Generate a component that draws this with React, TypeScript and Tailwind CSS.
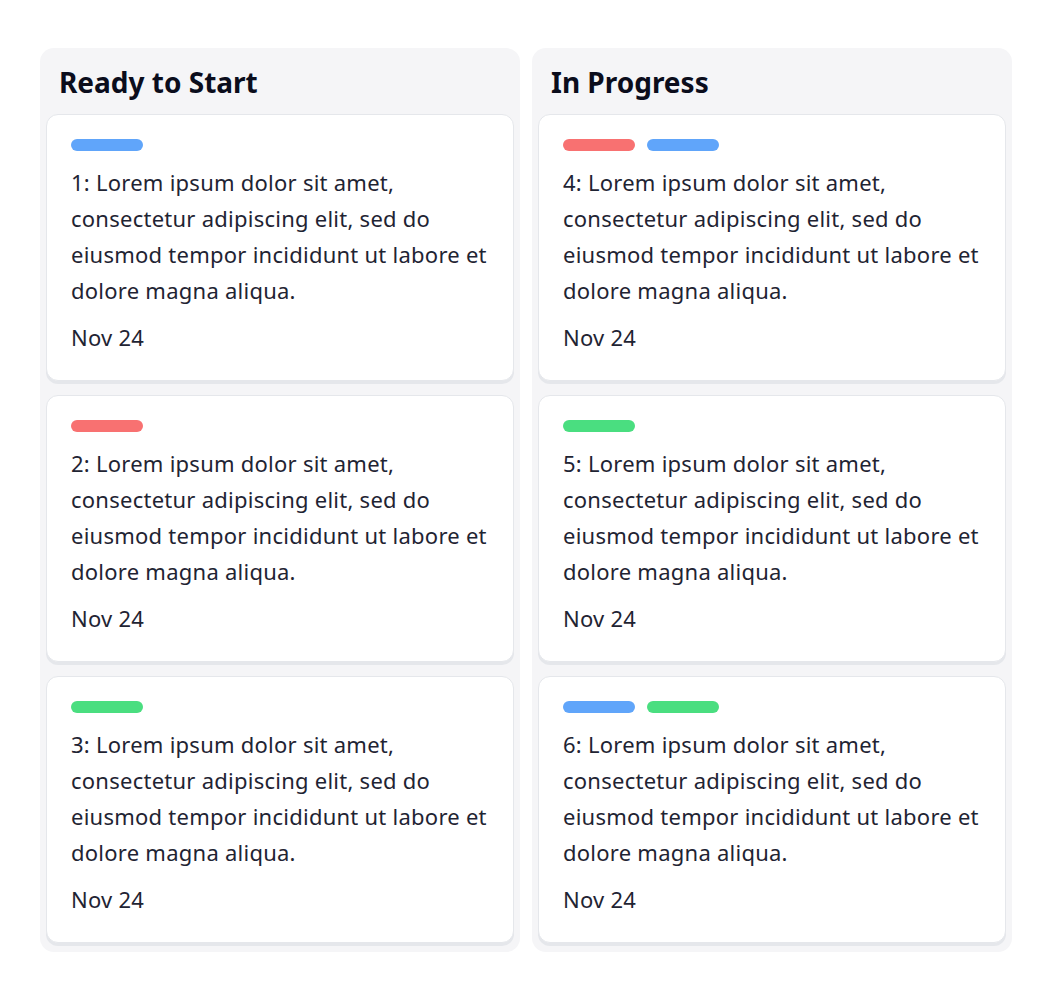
import React from "react";

const BLUE = "bg-[#60a5fa]";
const RED = "bg-[#f87171]";
const GREEN = "bg-[#4ade80]";

type Card = { id: number; tags: string[] };

const columns: { title: string; cards: Card[] }[] = [
  {
    title: "Ready to Start",
    cards: [
      { id: 1, tags: [BLUE] },
      { id: 2, tags: [RED] },
      { id: 3, tags: [GREEN] },
    ],
  },
  {
    title: "In Progress",
    cards: [
      { id: 4, tags: [RED, BLUE] },
      { id: 5, tags: [GREEN] },
      { id: 6, tags: [BLUE, GREEN] },
    ],
  },
];

function TaskCard({ card }: { card: Card }) {
  return (
    <div className="bg-white border border-[#e5e7eb] rounded-[12px] shadow-[0_3px_0_#e5e7eb] px-6 pt-6 pb-[25px]">
      <div className="flex gap-3 mb-[13px]">
        {card.tags.map((t, i) => (
          <span key={i} className={`block w-[72px] h-[12px] rounded-full ${t}`} />
        ))}
      </div>
      <p className="text-[22px] leading-[36px] tracking-[0.25px] text-[#1f2433] whitespace-nowrap">
        <span className="block">{card.id}: Lorem ipsum dolor sit amet,</span>
        <span className="block">consectetur adipiscing elit, sed do</span>
        <span className="block">eiusmod tempor incididunt ut labore et</span>
        <span className="block">dolore magna aliqua.</span>
      </p>
      <div className="mt-[11px] text-[22px] leading-[36px] tracking-[0.25px] text-[#1f2433]">Nov 24</div>
    </div>
  );
}

export default function App() {
  return (
    <div
      className="min-h-[991px] bg-white px-10 pt-12"
      style={{ fontFamily: '"Noto Sans", "Open Sans", sans-serif' }}
    >
      <div className="grid grid-cols-2 gap-[12px] w-[972px]">
        {columns.map((col) => (
          <div key={col.title} className="bg-[#f5f5f7] rounded-[14px] px-[6px] pb-[9px]">
            <h2 className="text-[28px] font-bold text-[#0b0d1c] leading-[36px] px-[13px] pt-[16px] pb-[14px]">
              {col.title}
            </h2>
            <div className="flex flex-col gap-[14px]">
              {col.cards.map((c) => (
                <TaskCard key={c.id} card={c} />
              ))}
            </div>
          </div>
        ))}
      </div>
    </div>
  );
}
